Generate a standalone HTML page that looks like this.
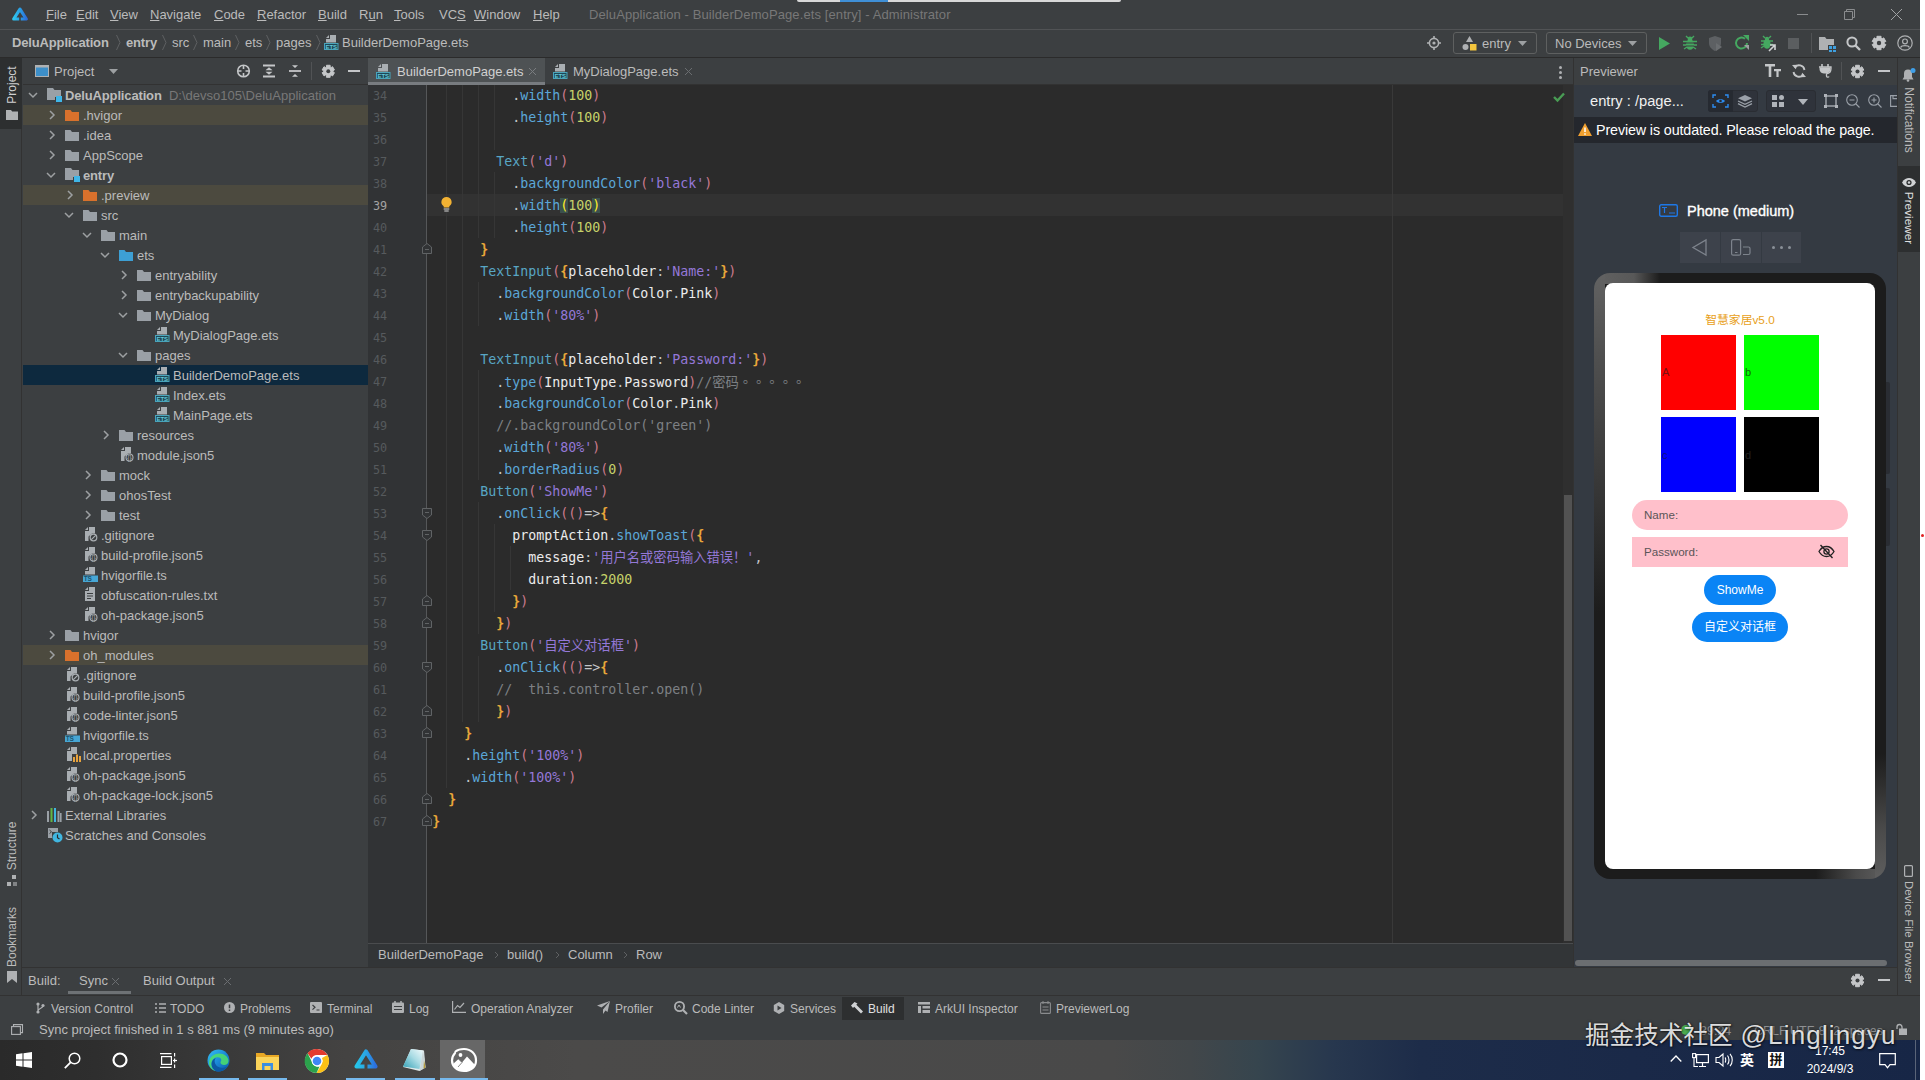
<!DOCTYPE html>
<html lang="en"><head><meta charset="utf-8"><title>DeluApplication - BuilderDemoPage.ets</title>
<style>
*{box-sizing:border-box;margin:0;padding:0}
html,body{width:1925px;height:1080px;overflow:hidden;background:#fff}
body{font-family:"Liberation Sans","Noto Sans CJK SC",sans-serif;font-size:13px;color:#bbb;position:relative}
#win{position:absolute;left:0;top:0;width:1920px;height:1080px;background:#3c3f41;overflow:hidden}
.a{position:absolute;white-space:pre}
.t{position:absolute;white-space:pre;line-height:20px;height:20px;margin-top:1px}
svg{position:absolute;overflow:visible}
.b{font-weight:bold}
.ln{font-family:"DejaVu Sans Mono","Liberation Mono",monospace;font-size:11.8px;line-height:22px;height:22px;letter-spacing:0;margin-top:1px}
.cl{font-family:"DejaVu Sans Mono","Liberation Mono","Noto Sans CJK SC",monospace;font-size:13.3px;line-height:22px;height:22px;letter-spacing:-.007px;margin-top:1px}
.cl .d{color:#c4c6c8}.cl .m{color:#5ba7d8}.cl .c{color:#58a6c4}.cl .p{color:#cc7b8e}.cl .n{color:#c6d26a}
.cl .s{color:#9478d8}.cl .b{color:#e8a63a}.cl .i{color:#ececec}.cl .k{color:#7d8084}
.cl .hp{color:#ffef28;background:#3b514d}
.cl .tc{font-family:"Noto Sans CJK TC","Noto Sans CJK SC",sans-serif;text-spacing-trim:space-all;font-feature-settings:"halt" 0,"chws" 0,"palt" 0}
.cl{text-spacing-trim:space-all}

</style></head><body>
<div id="win">
<div class="a" style="left:0;top:0;width:1920px;height:28px;background:#3c3f41"></div>
<div class="a" style="left:797px;top:0;width:324px;height:2px;background:#d8d8d8;border-radius:0 0 3px 3px"></div><div class="a" style="left:840px;top:0;width:48px;height:2px;background:#3f8fd6"></div>
<svg style="left:11px;top:6px" width="18" height="16" viewBox="0 0 18 16" ><defs><linearGradient id="lg" x1="0" y1="0" x2="1" y2="0"><stop offset="0" stop-color="#2fc6ee"/><stop offset=".5" stop-color="#2aa0e6"/><stop offset="1" stop-color="#2d6fdc"/></linearGradient></defs><path d="M9 3.200L15.300 13H2.700z" fill="none" stroke="url(#lg)" stroke-width="3.200" stroke-linejoin="round"/><path d="M8.200 11h1.600v4H8.200z" fill="#3c3f41"/></svg>
<div class="t " style="left:46px;top:4px;color:#bbb"><u>F</u>ile</div>
<div class="t " style="left:76px;top:4px;color:#bbb"><u>E</u>dit</div>
<div class="t " style="left:110px;top:4px;color:#bbb"><u>V</u>iew</div>
<div class="t " style="left:150px;top:4px;color:#bbb"><u>N</u>avigate</div>
<div class="t " style="left:214px;top:4px;color:#bbb"><u>C</u>ode</div>
<div class="t " style="left:257px;top:4px;color:#bbb"><u>R</u>efactor</div>
<div class="t " style="left:318px;top:4px;color:#bbb"><u>B</u>uild</div>
<div class="t " style="left:359px;top:4px;color:#bbb">R<u>u</u>n</div>
<div class="t " style="left:394px;top:4px;color:#bbb"><u>T</u>ools</div>
<div class="t " style="left:439px;top:4px;color:#bbb">VC<u>S</u></div>
<div class="t " style="left:474px;top:4px;color:#bbb"><u>W</u>indow</div>
<div class="t " style="left:533px;top:4px;color:#bbb"><u>H</u>elp</div>
<div class="t " style="left:589px;top:4px;color:#787878;letter-spacing:.1px">DeluApplication - BuilderDemoPage.ets [entry] - Administrator</div>
<div class="a" style="left:1797px;top:14px;width:11px;height:1px;background:#8a8c8e"></div>
<svg style="left:1844px;top:9px" width="11" height="11" viewBox="0 0 11 11" ><path d="M.5 2.5h8v8h-8z M2.5 2.5v-2h8v8h-2" fill="none" stroke="#8a8c8e" stroke-width="1"/></svg>
<svg style="left:1891px;top:9px" width="11" height="11" viewBox="0 0 11 11" ><path d="M0 0l11 11M11 0L0 11" stroke="#a0a2a4" stroke-width="1"/></svg>
<div class="a" style="left:0;top:29px;width:1920px;height:1px;background:#515355"></div>
<div class="a" style="left:0;top:57px;width:1920px;height:1px;background:#2b2b2b"></div>
<div class="t " style="left:12px;top:32px;color:#bbb;font-weight:bold;letter-spacing:-.15px">DeluApplication</div>
<div class="t " style="left:126px;top:32px;color:#bbb;font-weight:bold;letter-spacing:-.15px">entry</div>
<div class="t " style="left:172px;top:32px;color:#bbb;">src</div>
<div class="t " style="left:203px;top:32px;color:#bbb;">main</div>
<div class="t " style="left:245px;top:32px;color:#bbb;">ets</div>
<div class="t " style="left:276px;top:32px;color:#bbb;">pages</div>
<svg style="left:116px;top:35px" width="5" height="15" viewBox="0 0 5 15" ><path d="M.5 0l3.5 7.5L.5 15" fill="none" stroke="#5e6062" stroke-width="1"/></svg>
<svg style="left:162px;top:35px" width="5" height="15" viewBox="0 0 5 15" ><path d="M.5 0l3.5 7.5L.5 15" fill="none" stroke="#5e6062" stroke-width="1"/></svg>
<svg style="left:193px;top:35px" width="5" height="15" viewBox="0 0 5 15" ><path d="M.5 0l3.5 7.5L.5 15" fill="none" stroke="#5e6062" stroke-width="1"/></svg>
<svg style="left:235px;top:35px" width="5" height="15" viewBox="0 0 5 15" ><path d="M.5 0l3.5 7.5L.5 15" fill="none" stroke="#5e6062" stroke-width="1"/></svg>
<svg style="left:266px;top:35px" width="5" height="15" viewBox="0 0 5 15" ><path d="M.5 0l3.5 7.5L.5 15" fill="none" stroke="#5e6062" stroke-width="1"/></svg>
<svg style="left:316px;top:35px" width="5" height="15" viewBox="0 0 5 15" ><path d="M.5 0l3.5 7.5L.5 15" fill="none" stroke="#5e6062" stroke-width="1"/></svg>
<svg style="left:324px;top:35px" width="15" height="15" viewBox="0 0 15 15" ><path d="M6 0H12V7.5H2V4H6z" fill="#a9aeb2"/><path d="M5 0V3H2z" fill="#a9aeb2"/><rect x=".5" y="8.500" width="13.500" height="6" fill="#1f4756" stroke="#49a4ba" stroke-width="1"/><text x="7.300" y="13.600" font-family="Liberation Sans,sans-serif" font-size="6" font-weight="bold" fill="#62c6d8" text-anchor="middle">ETS</text></svg>
<div class="t " style="left:342px;top:32px;color:#bbb">BuilderDemoPage.ets</div>
<svg style="left:1427px;top:36px" width="14" height="14" viewBox="0 0 14 14" ><circle cx="7" cy="7" r="4.6" fill="none" stroke="#afb1b3" stroke-width="1.6"/><circle cx="7" cy="7" r="1.6" fill="#afb1b3"/><path d="M7 0v2.4M7 11.6V14M0 7h2.4M11.6 7H14" stroke="#afb1b3" stroke-width="1.6"/></svg>
<div class="a" style="left:1453px;top:32px;width:84px;height:22px;border:1px solid #5e6060;border-radius:3px;background:#3c3f41"></div>
<svg style="left:1462px;top:36px" width="15" height="15" viewBox="0 0 15 15" ><path d="M7.5 0l3.5 6h-7z" fill="#afb1b3"/><circle cx="3.5" cy="11" r="3" fill="#afb1b3"/><rect x="8" y="8" width="6.5" height="6.5" fill="#f4c63d"/></svg>
<div class="t " style="left:1482px;top:33px;color:#bbb">entry</div>
<svg style="left:1518px;top:41px" width="9" height="5" viewBox="0 0 9 5" ><path d="M0 0h9L4.5 5z" fill="#9da0a2"/></svg>
<div class="a" style="left:1546px;top:32px;width:101px;height:22px;border:1px solid #5e6060;border-radius:3px;background:#3c3f41"></div>
<div class="t " style="left:1555px;top:33px;color:#bbb">No Devices</div>
<svg style="left:1628px;top:41px" width="9" height="5" viewBox="0 0 9 5" ><path d="M0 0h9L4.5 5z" fill="#9da0a2"/></svg>
<svg style="left:1659px;top:37px" width="12" height="13" viewBox="0 0 12 13" ><path d="M0 0l11 6.5L0 13z" fill="#45a860"/></svg>
<svg style="left:1683px;top:36px" width="14" height="15" viewBox="0 0 14 15" ><ellipse cx="7" cy="8.5" rx="4" ry="5.2" fill="#45a860"/><circle cx="7" cy="3" r="2.4" fill="#45a860"/><path d="M0 5.5h14M0 9h14M1 13l3-2M13 13l-3-2M3 0l2 2M11 0l-2 2" stroke="#45a860" stroke-width="1.3"/><path d="M3 7h8M3 10h8" stroke="#3c3f41" stroke-width="1"/></svg>
<svg style="left:1708px;top:36px" width="15" height="15" viewBox="0 0 15 15" ><path d="M1 2l6-2 6 2v5c0 4-3 6.5-6 8-3-1.5-6-4-6-8z" fill="#5d6063"/><path d="M8 7l6 4-6 4z" fill="#6a6d70"/></svg>
<svg style="left:1734px;top:35px" width="16" height="16" viewBox="0 0 16 16" ><path d="M13 8a5.5 5.5 0 1 1-2-4.2" fill="none" stroke="#45a860" stroke-width="2"/><path d="M9 0h6v6z" fill="#45a860"/><path d="M10 10h5v5z" fill="#9da0a2"/></svg>
<svg style="left:1761px;top:36px" width="15" height="16" viewBox="0 0 15 16" ><ellipse cx="6" cy="8" rx="3.6" ry="4.8" fill="#45a860"/><circle cx="6" cy="3" r="2.2" fill="#45a860"/><path d="M0 5h12M0 8.5h12M0 12l3-2M2 0l2 2M10 0l-2 2" stroke="#45a860" stroke-width="1.3"/><path d="M8 15l6-6M9 9h5v5" fill="none" stroke="#d0d2d4" stroke-width="1.6"/></svg>
<div class="a" style="left:1788px;top:38px;width:11px;height:11px;background:#5b5e60"></div>
<div class="a" style="left:1811px;top:33px;width:1px;height:20px;background:#515355"></div>
<svg style="left:1819px;top:37px" width="17" height="14" viewBox="0 0 17 14" ><path d="M0 0h6l1.5 2H15v6H9v5H0z" fill="#afb1b3"/><rect x="10" y="9" width="3" height="3" fill="#3fa0e0"/><rect x="14" y="9" width="3" height="3" fill="#3fa0e0"/><rect x="10" y="13" width="3" height="2" fill="#3fa0e0"/><rect x="14" y="13" width="3" height="2" fill="#3fa0e0"/></svg>
<svg style="left:1846px;top:36px" width="15" height="15" viewBox="0 0 15 15" ><circle cx="6" cy="6" r="4.6" fill="none" stroke="#c4c6c8" stroke-width="2"/><path d="M9.5 9.5l4.5 4.5" stroke="#c4c6c8" stroke-width="2.4"/></svg>
<svg style="left:1872px;top:36px" width="14" height="14" viewBox="0 0 14 14" ><g transform="translate(7,7)"><path d="M-2.02 -4.77 L-2.07 -6.69 L2.07 -6.69 L2.02 -4.77 L3.12 -4.13 L4.76 -5.14 L6.83 -1.55 L5.14 -0.64 L5.14 0.64 L6.83 1.55 L4.76 5.14 L3.12 4.13 L2.02 4.77 L2.07 6.69 L-2.07 6.69 L-2.02 4.77 L-3.12 4.13 L-4.76 5.14 L-6.83 1.55 L-5.14 0.64 L-5.14 -0.64 L-6.83 -1.55 L-4.76 -5.14 L-3.12 -4.13z" fill="#c4c6c8" stroke="#c4c6c8" stroke-width="1" stroke-linejoin="round"/><circle r="2.17" fill="#3c3f41"/></g></svg>
<svg style="left:1897px;top:35px" width="16" height="16" viewBox="0 0 16 16" ><circle cx="8" cy="8" r="7.2" fill="none" stroke="#afb1b3" stroke-width="1.2"/><circle cx="8" cy="6.4" r="2.4" fill="none" stroke="#afb1b3" stroke-width="1.2"/><path d="M3.6 12.5c1-2.4 7.8-2.4 8.8 0" fill="none" stroke="#afb1b3" stroke-width="1.2"/></svg>
<div class="a" style="left:0;top:58px;width:22px;height:937px;background:#3c3f41;border-right:1px solid #323232"></div>
<div class="a" style="left:0;top:58px;width:22px;height:71px;background:#2d2f30"></div>
<div class="a" style="left:-13px;top:75px;width:50px;height:20px;line-height:20px;transform:rotate(-90deg);color:#d0d0d0;font-size:12px;text-align:center">Project</div>
<svg style="left:6px;top:110px" width="11" height="9" viewBox="0 0 11 9" ><path d="M0 0h5l1.2 1.6H12V10H0z" fill="#afb1b3"/></svg>
<div class="a" style="left:-18px;top:836px;width:60px;height:20px;line-height:20px;transform:rotate(-90deg);color:#bbb;font-size:12px;text-align:center">Structure</div>
<svg style="left:7px;top:875px" width="10" height="12" viewBox="0 0 10 12" ><rect x="5" y="0" width="4" height="4" fill="#afb1b3"/><rect x="0" y="7" width="4" height="4" fill="#afb1b3"/><rect x="6" y="7" width="4" height="4" fill="#afb1b3" opacity=".6"/></svg>
<div class="a" style="left:-23px;top:927px;width:70px;height:20px;line-height:20px;transform:rotate(-90deg);color:#bbb;font-size:12px;text-align:center">Bookmarks</div>
<svg style="left:7px;top:971px" width="10" height="12" viewBox="0 0 10 12" ><path d="M0 0h10v12L5 8 0 12z" fill="#afb1b3"/></svg>
<div class="a" style="left:23px;top:58px;width:345px;height:27px;background:#3c3f41;border-bottom:1px solid #323232"></div>
<svg style="left:35px;top:65px" width="14" height="12" viewBox="0 0 14 12" ><rect x=".5" y=".5" width="13" height="11" fill="#3d8fc9" stroke="#afb1b3"/><rect x="0" y="0" width="14" height="2.5" fill="#afb1b3"/></svg>
<div class="t " style="left:54px;top:61px;color:#bbb">Project</div>
<svg style="left:109px;top:69px" width="9" height="5" viewBox="0 0 9 5" ><path d="M0 0h9L4.5 5z" fill="#9da0a2"/></svg>
<svg style="left:236px;top:64px" width="15" height="15" viewBox="0 0 15 15" ><circle cx="7.500" cy="7" r="5.800" fill="none" stroke="#c4c6c8" stroke-width="1.600"/><path d="M7.500 1v4M7.500 9v4M1.500 7h4M9.500 7h4" stroke="#c4c6c8" stroke-width="1.600"/></svg>
<svg style="left:263px;top:64px" width="12" height="14" viewBox="0 0 12 14" ><path d="M0 1.500h12M0 12.500h12" stroke="#c4c6c8" stroke-width="1.800"/><path d="M2.500 6.300l3.500-3 3.500 3zM2.500 7.700l3.500 3 3.500-3z" fill="#c4c6c8"/></svg>
<svg style="left:289px;top:64px" width="12" height="14" viewBox="0 0 12 14" ><path d="M0 7h12" stroke="#c4c6c8" stroke-width="1.800"/><path d="M3 1.200l3 2.800 3-2.800zM3 12.800l3-2.800 3 2.800z" fill="#c4c6c8"/></svg>
<div class="a" style="left:311px;top:62px;width:1px;height:18px;background:#515355"></div>
<svg style="left:321.7px;top:64.7px" width="12.6" height="12.6" viewBox="0 0 12.6 12.6" ><g transform="translate(6.3,6.3)"><path d="M-1.82 -4.29 L-1.86 -6.02 L1.86 -6.02 L1.82 -4.29 L2.81 -3.72 L4.28 -4.62 L6.14 -1.40 L4.63 -0.57 L4.63 0.57 L6.14 1.40 L4.28 4.62 L2.81 3.72 L1.82 4.29 L1.86 6.02 L-1.86 6.02 L-1.82 4.29 L-2.81 3.72 L-4.28 4.62 L-6.14 1.40 L-4.63 0.57 L-4.63 -0.57 L-6.14 -1.40 L-4.28 -4.62 L-2.81 -3.72z" fill="#c4c6c8" stroke="#c4c6c8" stroke-width="1" stroke-linejoin="round"/><circle r="1.95" fill="#3c3f41"/></g></svg>
<div class="a" style="left:348px;top:70px;width:12px;height:2px;background:#c4c6c8"></div>
<div class="a" style="left:368px;top:58px;width:1205px;height:27px;background:#3c3f41;border-bottom:1px solid #323232"></div>
<div class="a" style="left:368px;top:58px;width:177px;height:27px;background:#4e5254"></div>
<div class="a" style="left:368px;top:82px;width:177px;height:3px;background:#787c80"></div>
<svg style="left:376px;top:64px" width="15" height="15" viewBox="0 0 15 15" ><path d="M6 0H12V7.5H2V4H6z" fill="#a9aeb2"/><path d="M5 0V3H2z" fill="#a9aeb2"/><rect x=".5" y="8.500" width="13.500" height="6" fill="#1f4756" stroke="#49a4ba" stroke-width="1"/><text x="7.300" y="13.600" font-family="Liberation Sans,sans-serif" font-size="6" font-weight="bold" fill="#62c6d8" text-anchor="middle">ETS</text></svg>
<div class="t " style="left:397px;top:61px;color:#d0d0d0">BuilderDemoPage.ets</div>
<svg style="left:529px;top:68px" width="7" height="7" viewBox="0 0 7 7" ><path d="M0 0l7 7M7 0L0 7" stroke="#7a7d80" stroke-width="1"/></svg>
<svg style="left:553px;top:64px" width="15" height="15" viewBox="0 0 15 15" ><path d="M6 0H12V7.5H2V4H6z" fill="#a9aeb2"/><path d="M5 0V3H2z" fill="#a9aeb2"/><rect x=".5" y="8.500" width="13.500" height="6" fill="#1f4756" stroke="#49a4ba" stroke-width="1"/><text x="7.300" y="13.600" font-family="Liberation Sans,sans-serif" font-size="6" font-weight="bold" fill="#62c6d8" text-anchor="middle">ETS</text></svg>
<div class="t " style="left:573px;top:61px;color:#bbb">MyDialogPage.ets</div>
<svg style="left:685px;top:68px" width="7" height="7" viewBox="0 0 7 7" ><path d="M0 0l7 7M7 0L0 7" stroke="#6a6d70" stroke-width="1"/></svg>
<div class="a" style="left:1559px;top:66px;width:3px;height:3px;border-radius:2px;background:#afb1b3"></div>
<div class="a" style="left:1559px;top:71px;width:3px;height:3px;border-radius:2px;background:#afb1b3"></div>
<div class="a" style="left:1559px;top:76px;width:3px;height:3px;border-radius:2px;background:#afb1b3"></div>
<div class="a" style="left:1897px;top:58px;width:23px;height:940px;background:#3c3f41;border-left:1px solid #323232"></div>
<div class="a" style="left:1898px;top:166px;width:22px;height:86px;background:#2d2f30"></div>
<svg style="left:1902px;top:68px" width="14" height="13" viewBox="0 0 14 13" ><path d="M6 1.5a4 4 0 0 0-4 4V9l-1.5 2.5h11L10 9V5.5a4 4 0 0 0-4-4z" fill="#afb1b3"/><circle cx="6" cy="12.5" r="1.3" fill="#afb1b3"/><circle cx="11" cy="2.5" r="2.5" fill="#3f9fe8"/></svg>
<div class="a" style="left:1869px;top:110px;width:80px;height:20px;line-height:20px;transform:rotate(90deg);color:#bbb;font-size:12px;text-align:center">Notifications</div>
<svg style="left:1902px;top:178px" width="14" height="9" viewBox="0 0 14 9" ><path d="M0 4.5C2 1 4.5 0 7 0s5 1 7 4.5C12 8 9.500 9 7 9S2 8 0 4.500z" fill="#d0d2d4"/><circle cx="7" cy="4.5" r="2.6" fill="#2d2f30"/><circle cx="7" cy="4.5" r="1.2" fill="#d0d2d4"/></svg>
<div class="a" style="left:1879px;top:208px;width:60px;height:20px;line-height:20px;transform:rotate(90deg);color:#e0e0e0;font-size:11.800px;text-align:center">Previewer</div>
<svg style="left:1904px;top:865px" width="9" height="12" viewBox="0 0 9 12" ><rect x=".6" y=".6" width="7.8" height="10.8" rx="1" fill="none" stroke="#afb1b3" stroke-width="1.2"/></svg>
<div class="a" style="left:1849px;top:922px;width:120px;height:20px;line-height:20px;transform:rotate(90deg);color:#bbb;font-size:11.500px;text-align:center">Device File Browser</div>
<div class="a" style="left:23px;top:85px;width:345px;height:882px;background:#3c3f41"></div>
<svg style="left:28px;top:91px" width="10" height="8" viewBox="0 0 10 8" ><path d="M1 2l4 4 4-4" fill="none" stroke="#9da0a2" stroke-width="1.5"/></svg>
<svg style="left:47px;top:88px" width="16" height="14" viewBox="0 0 16 14" ><path d="M0 0h6l1.5 2H14v7H8v3H0z" fill="#9aa0a6"/><rect x="9" y="8" width="6" height="6" fill="#3fb6e8"/></svg>
<div class="t" style="left:65px;top:85px;color:#bbb;font-weight:bold;letter-spacing:-.15px;">DeluApplication<span style="font-weight:normal;color:#787878;letter-spacing:0">&nbsp; D:\devso105\DeluApplication</span></div>
<div class="a" style="left:23px;top:105px;width:345px;height:20px;background:#4c4a3f"></div>
<svg style="left:48px;top:110px" width="8" height="10" viewBox="0 0 8 10" ><path d="M2 1l4 4-4 4" fill="none" stroke="#9da0a2" stroke-width="1.5"/></svg>
<svg style="left:65px;top:110px" width="14" height="11" viewBox="0 0 14 11" ><path d="M0 0h5.500l1.500 2H14v9H0z" fill="#d9712c"/></svg>
<div class="t" style="left:83px;top:105px;color:#bbb;">.hvigor</div>
<svg style="left:48px;top:130px" width="8" height="10" viewBox="0 0 8 10" ><path d="M2 1l4 4-4 4" fill="none" stroke="#9da0a2" stroke-width="1.5"/></svg>
<svg style="left:65px;top:130px" width="14" height="11" viewBox="0 0 14 11" ><path d="M0 0h5.500l1.500 2H14v9H0z" fill="#9aa0a6"/></svg>
<div class="t" style="left:83px;top:125px;color:#bbb;">.idea</div>
<svg style="left:48px;top:150px" width="8" height="10" viewBox="0 0 8 10" ><path d="M2 1l4 4-4 4" fill="none" stroke="#9da0a2" stroke-width="1.5"/></svg>
<svg style="left:65px;top:150px" width="14" height="11" viewBox="0 0 14 11" ><path d="M0 0h5.500l1.500 2H14v9H0z" fill="#9aa0a6"/></svg>
<div class="t" style="left:83px;top:145px;color:#bbb;">AppScope</div>
<svg style="left:46px;top:171px" width="10" height="8" viewBox="0 0 10 8" ><path d="M1 2l4 4 4-4" fill="none" stroke="#9da0a2" stroke-width="1.5"/></svg>
<svg style="left:65px;top:168px" width="16" height="14" viewBox="0 0 16 14" ><path d="M0 0h6l1.5 2H14v7H8v3H0z" fill="#9aa0a6"/><rect x="9" y="8" width="6" height="6" fill="#3fb6e8"/></svg>
<div class="t" style="left:83px;top:165px;color:#bbb;font-weight:bold;letter-spacing:-.15px;">entry</div>
<div class="a" style="left:23px;top:185px;width:345px;height:20px;background:#4c4a3f"></div>
<svg style="left:66px;top:190px" width="8" height="10" viewBox="0 0 8 10" ><path d="M2 1l4 4-4 4" fill="none" stroke="#9da0a2" stroke-width="1.5"/></svg>
<svg style="left:83px;top:190px" width="14" height="11" viewBox="0 0 14 11" ><path d="M0 0h5.500l1.500 2H14v9H0z" fill="#d9712c"/></svg>
<div class="t" style="left:101px;top:185px;color:#bbb;">.preview</div>
<svg style="left:64px;top:211px" width="10" height="8" viewBox="0 0 10 8" ><path d="M1 2l4 4 4-4" fill="none" stroke="#9da0a2" stroke-width="1.5"/></svg>
<svg style="left:83px;top:210px" width="14" height="11" viewBox="0 0 14 11" ><path d="M0 0h5.500l1.500 2H14v9H0z" fill="#9aa0a6"/></svg>
<div class="t" style="left:101px;top:205px;color:#bbb;">src</div>
<svg style="left:82px;top:231px" width="10" height="8" viewBox="0 0 10 8" ><path d="M1 2l4 4 4-4" fill="none" stroke="#9da0a2" stroke-width="1.5"/></svg>
<svg style="left:101px;top:230px" width="14" height="11" viewBox="0 0 14 11" ><path d="M0 0h5.500l1.500 2H14v9H0z" fill="#9aa0a6"/></svg>
<div class="t" style="left:119px;top:225px;color:#bbb;">main</div>
<svg style="left:100px;top:251px" width="10" height="8" viewBox="0 0 10 8" ><path d="M1 2l4 4 4-4" fill="none" stroke="#9da0a2" stroke-width="1.5"/></svg>
<svg style="left:119px;top:250px" width="14" height="11" viewBox="0 0 14 11" ><path d="M0 0h5.500l1.500 2H14v9H0z" fill="#3d9fd4"/></svg>
<div class="t" style="left:137px;top:245px;color:#bbb;">ets</div>
<svg style="left:120px;top:270px" width="8" height="10" viewBox="0 0 8 10" ><path d="M2 1l4 4-4 4" fill="none" stroke="#9da0a2" stroke-width="1.5"/></svg>
<svg style="left:137px;top:270px" width="14" height="11" viewBox="0 0 14 11" ><path d="M0 0h5.500l1.500 2H14v9H0z" fill="#9aa0a6"/></svg>
<div class="t" style="left:155px;top:265px;color:#bbb;">entryability</div>
<svg style="left:120px;top:290px" width="8" height="10" viewBox="0 0 8 10" ><path d="M2 1l4 4-4 4" fill="none" stroke="#9da0a2" stroke-width="1.5"/></svg>
<svg style="left:137px;top:290px" width="14" height="11" viewBox="0 0 14 11" ><path d="M0 0h5.500l1.500 2H14v9H0z" fill="#9aa0a6"/></svg>
<div class="t" style="left:155px;top:285px;color:#bbb;">entrybackupability</div>
<svg style="left:118px;top:311px" width="10" height="8" viewBox="0 0 10 8" ><path d="M1 2l4 4 4-4" fill="none" stroke="#9da0a2" stroke-width="1.5"/></svg>
<svg style="left:137px;top:310px" width="14" height="11" viewBox="0 0 14 11" ><path d="M0 0h5.500l1.500 2H14v9H0z" fill="#9aa0a6"/></svg>
<div class="t" style="left:155px;top:305px;color:#bbb;">MyDialog</div>
<svg style="left:155px;top:327px" width="15" height="15" viewBox="0 0 15 15" ><path d="M6 0H12V7.5H2V4H6z" fill="#a9aeb2"/><path d="M5 0V3H2z" fill="#a9aeb2"/><rect x=".5" y="8.500" width="13.500" height="6" fill="#1f4756" stroke="#49a4ba" stroke-width="1"/><text x="7.300" y="13.600" font-family="Liberation Sans,sans-serif" font-size="6" font-weight="bold" fill="#62c6d8" text-anchor="middle">ETS</text></svg>
<div class="t" style="left:173px;top:325px;color:#bbb;">MyDialogPage.ets</div>
<svg style="left:118px;top:351px" width="10" height="8" viewBox="0 0 10 8" ><path d="M1 2l4 4 4-4" fill="none" stroke="#9da0a2" stroke-width="1.5"/></svg>
<svg style="left:137px;top:350px" width="14" height="11" viewBox="0 0 14 11" ><path d="M0 0h5.500l1.500 2H14v9H0z" fill="#9aa0a6"/></svg>
<div class="t" style="left:155px;top:345px;color:#bbb;">pages</div>
<div class="a" style="left:23px;top:365px;width:345px;height:20px;background:#0d293e"></div>
<svg style="left:155px;top:367px" width="15" height="15" viewBox="0 0 15 15" ><path d="M6 0H12V7.5H2V4H6z" fill="#a9aeb2"/><path d="M5 0V3H2z" fill="#a9aeb2"/><rect x=".5" y="8.500" width="13.500" height="6" fill="#1f4756" stroke="#49a4ba" stroke-width="1"/><text x="7.300" y="13.600" font-family="Liberation Sans,sans-serif" font-size="6" font-weight="bold" fill="#62c6d8" text-anchor="middle">ETS</text></svg>
<div class="t" style="left:173px;top:365px;color:#bbb;">BuilderDemoPage.ets</div>
<svg style="left:155px;top:387px" width="15" height="15" viewBox="0 0 15 15" ><path d="M6 0H12V7.5H2V4H6z" fill="#a9aeb2"/><path d="M5 0V3H2z" fill="#a9aeb2"/><rect x=".5" y="8.500" width="13.500" height="6" fill="#1f4756" stroke="#49a4ba" stroke-width="1"/><text x="7.300" y="13.600" font-family="Liberation Sans,sans-serif" font-size="6" font-weight="bold" fill="#62c6d8" text-anchor="middle">ETS</text></svg>
<div class="t" style="left:173px;top:385px;color:#bbb;">Index.ets</div>
<svg style="left:155px;top:407px" width="15" height="15" viewBox="0 0 15 15" ><path d="M6 0H12V7.5H2V4H6z" fill="#a9aeb2"/><path d="M5 0V3H2z" fill="#a9aeb2"/><rect x=".5" y="8.500" width="13.500" height="6" fill="#1f4756" stroke="#49a4ba" stroke-width="1"/><text x="7.300" y="13.600" font-family="Liberation Sans,sans-serif" font-size="6" font-weight="bold" fill="#62c6d8" text-anchor="middle">ETS</text></svg>
<div class="t" style="left:173px;top:405px;color:#bbb;">MainPage.ets</div>
<svg style="left:102px;top:430px" width="8" height="10" viewBox="0 0 8 10" ><path d="M2 1l4 4-4 4" fill="none" stroke="#9da0a2" stroke-width="1.5"/></svg>
<svg style="left:119px;top:430px" width="14" height="11" viewBox="0 0 14 11" ><path d="M0 0h5.500l1.500 2H14v9H0z" fill="#9aa0a6"/></svg>
<div class="t" style="left:137px;top:425px;color:#bbb;">resources</div>
<svg style="left:120px;top:447px" width="15" height="15" viewBox="0 0 15 15" ><path d="M5 0H11V6.500H8L4.500 9.500V14H1V4H5z" fill="#a9aeb2"/><path d="M4 0V3H1z" fill="#a9aeb2"/><circle cx="9.500" cy="10.500" r="3.500" fill="none" stroke="#a9aeb2" stroke-width="1.100"/><text x="9.500" y="12.700" font-family="Liberation Sans,sans-serif" font-size="6.500" fill="#a9aeb2" text-anchor="middle">{}</text></svg>
<div class="t" style="left:137px;top:445px;color:#bbb;">module.json5</div>
<svg style="left:84px;top:470px" width="8" height="10" viewBox="0 0 8 10" ><path d="M2 1l4 4-4 4" fill="none" stroke="#9da0a2" stroke-width="1.5"/></svg>
<svg style="left:101px;top:470px" width="14" height="11" viewBox="0 0 14 11" ><path d="M0 0h5.500l1.500 2H14v9H0z" fill="#9aa0a6"/></svg>
<div class="t" style="left:119px;top:465px;color:#bbb;">mock</div>
<svg style="left:84px;top:490px" width="8" height="10" viewBox="0 0 8 10" ><path d="M2 1l4 4-4 4" fill="none" stroke="#9da0a2" stroke-width="1.5"/></svg>
<svg style="left:101px;top:490px" width="14" height="11" viewBox="0 0 14 11" ><path d="M0 0h5.500l1.500 2H14v9H0z" fill="#9aa0a6"/></svg>
<div class="t" style="left:119px;top:485px;color:#bbb;">ohosTest</div>
<svg style="left:84px;top:510px" width="8" height="10" viewBox="0 0 8 10" ><path d="M2 1l4 4-4 4" fill="none" stroke="#9da0a2" stroke-width="1.5"/></svg>
<svg style="left:101px;top:510px" width="14" height="11" viewBox="0 0 14 11" ><path d="M0 0h5.500l1.500 2H14v9H0z" fill="#9aa0a6"/></svg>
<div class="t" style="left:119px;top:505px;color:#bbb;">test</div>
<svg style="left:84px;top:527px" width="15" height="15" viewBox="0 0 15 15" ><path d="M5 0H11V6.500H8L4.500 9.500V14H1V4H5z" fill="#a9aeb2"/><path d="M4 0V3H1z" fill="#a9aeb2"/><circle cx="9.500" cy="10.500" r="3.300" fill="none" stroke="#a9aeb2" stroke-width="1.200"/><path d="M7.300 12.700l4.400-4.400" stroke="#a9aeb2" stroke-width="1.200"/></svg>
<div class="t" style="left:101px;top:525px;color:#bbb;">.gitignore</div>
<svg style="left:84px;top:547px" width="15" height="15" viewBox="0 0 15 15" ><path d="M5 0H11V6.500H8L4.500 9.500V14H1V4H5z" fill="#a9aeb2"/><path d="M4 0V3H1z" fill="#a9aeb2"/><circle cx="9.500" cy="10.500" r="3.500" fill="none" stroke="#a9aeb2" stroke-width="1.100"/><text x="9.500" y="12.700" font-family="Liberation Sans,sans-serif" font-size="6.500" fill="#a9aeb2" text-anchor="middle">{}</text></svg>
<div class="t" style="left:101px;top:545px;color:#bbb;">build-profile.json5</div>
<svg style="left:83px;top:567px" width="15" height="15" viewBox="0 0 15 15" ><path d="M6 0H12V7.5H2V4H6z" fill="#a9aeb2"/><path d="M5 0V3H2z" fill="#a9aeb2"/><rect x="0" y="8.500" width="15" height="6.500" fill="#47a6d4"/><text x="4.800" y="14.200" font-family="Liberation Sans,sans-serif" font-size="6.500" font-weight="bold" fill="#1c536e" text-anchor="middle">TS</text></svg>
<div class="t" style="left:101px;top:565px;color:#bbb;">hvigorfile.ts</div>
<svg style="left:84px;top:587px" width="15" height="15" viewBox="0 0 15 15" ><path d="M5 0H11V14H1V4H5z" fill="#a9aeb2"/><path d="M4 0V3H1z" fill="#a9aeb2"/><path d="M3 6.500h6M3 9h6M3 11.500h4" stroke="#3c3f41" stroke-width="1.100"/></svg>
<div class="t" style="left:101px;top:585px;color:#bbb;">obfuscation-rules.txt</div>
<svg style="left:84px;top:607px" width="15" height="15" viewBox="0 0 15 15" ><path d="M5 0H11V6.500H8L4.500 9.500V14H1V4H5z" fill="#a9aeb2"/><path d="M4 0V3H1z" fill="#a9aeb2"/><circle cx="9.500" cy="10.500" r="3.500" fill="none" stroke="#a9aeb2" stroke-width="1.100"/><text x="9.500" y="12.700" font-family="Liberation Sans,sans-serif" font-size="6.500" fill="#a9aeb2" text-anchor="middle">{}</text></svg>
<div class="t" style="left:101px;top:605px;color:#bbb;">oh-package.json5</div>
<svg style="left:48px;top:630px" width="8" height="10" viewBox="0 0 8 10" ><path d="M2 1l4 4-4 4" fill="none" stroke="#9da0a2" stroke-width="1.5"/></svg>
<svg style="left:65px;top:630px" width="14" height="11" viewBox="0 0 14 11" ><path d="M0 0h5.500l1.500 2H14v9H0z" fill="#9aa0a6"/></svg>
<div class="t" style="left:83px;top:625px;color:#bbb;">hvigor</div>
<div class="a" style="left:23px;top:645px;width:345px;height:20px;background:#4c4a3f"></div>
<svg style="left:48px;top:650px" width="8" height="10" viewBox="0 0 8 10" ><path d="M2 1l4 4-4 4" fill="none" stroke="#9da0a2" stroke-width="1.5"/></svg>
<svg style="left:65px;top:650px" width="14" height="11" viewBox="0 0 14 11" ><path d="M0 0h5.500l1.500 2H14v9H0z" fill="#d9712c"/></svg>
<div class="t" style="left:83px;top:645px;color:#bbb;">oh_modules</div>
<svg style="left:66px;top:667px" width="15" height="15" viewBox="0 0 15 15" ><path d="M5 0H11V6.500H8L4.500 9.500V14H1V4H5z" fill="#a9aeb2"/><path d="M4 0V3H1z" fill="#a9aeb2"/><circle cx="9.500" cy="10.500" r="3.300" fill="none" stroke="#a9aeb2" stroke-width="1.200"/><path d="M7.300 12.700l4.400-4.400" stroke="#a9aeb2" stroke-width="1.200"/></svg>
<div class="t" style="left:83px;top:665px;color:#bbb;">.gitignore</div>
<svg style="left:66px;top:687px" width="15" height="15" viewBox="0 0 15 15" ><path d="M5 0H11V6.500H8L4.500 9.500V14H1V4H5z" fill="#a9aeb2"/><path d="M4 0V3H1z" fill="#a9aeb2"/><circle cx="9.500" cy="10.500" r="3.500" fill="none" stroke="#a9aeb2" stroke-width="1.100"/><text x="9.500" y="12.700" font-family="Liberation Sans,sans-serif" font-size="6.500" fill="#a9aeb2" text-anchor="middle">{}</text></svg>
<div class="t" style="left:83px;top:685px;color:#bbb;">build-profile.json5</div>
<svg style="left:66px;top:707px" width="15" height="15" viewBox="0 0 15 15" ><path d="M5 0H11V6.500H8L4.500 9.500V14H1V4H5z" fill="#a9aeb2"/><path d="M4 0V3H1z" fill="#a9aeb2"/><circle cx="9.500" cy="10.500" r="3.500" fill="none" stroke="#a9aeb2" stroke-width="1.100"/><text x="9.500" y="12.700" font-family="Liberation Sans,sans-serif" font-size="6.500" fill="#a9aeb2" text-anchor="middle">{}</text></svg>
<div class="t" style="left:83px;top:705px;color:#bbb;">code-linter.json5</div>
<svg style="left:65px;top:727px" width="15" height="15" viewBox="0 0 15 15" ><path d="M6 0H12V7.5H2V4H6z" fill="#a9aeb2"/><path d="M5 0V3H2z" fill="#a9aeb2"/><rect x="0" y="8.500" width="15" height="6.500" fill="#47a6d4"/><text x="4.800" y="14.200" font-family="Liberation Sans,sans-serif" font-size="6.500" font-weight="bold" fill="#1c536e" text-anchor="middle">TS</text></svg>
<div class="t" style="left:83px;top:725px;color:#bbb;">hvigorfile.ts</div>
<svg style="left:66px;top:747px" width="15" height="15" viewBox="0 0 15 15" ><path d="M5 0H11V7H6V14H1V4H5z" fill="#a9aeb2"/><path d="M4 0V3H1z" fill="#a9aeb2"/><rect x="7" y="10" width="2" height="5" fill="#e8a33d"/><rect x="10" y="7.500" width="2" height="7.500" fill="#e8a33d"/><rect x="13" y="9" width="2" height="6" fill="#e8a33d"/></svg>
<div class="t" style="left:83px;top:745px;color:#bbb;">local.properties</div>
<svg style="left:66px;top:767px" width="15" height="15" viewBox="0 0 15 15" ><path d="M5 0H11V6.500H8L4.500 9.500V14H1V4H5z" fill="#a9aeb2"/><path d="M4 0V3H1z" fill="#a9aeb2"/><circle cx="9.500" cy="10.500" r="3.500" fill="none" stroke="#a9aeb2" stroke-width="1.100"/><text x="9.500" y="12.700" font-family="Liberation Sans,sans-serif" font-size="6.500" fill="#a9aeb2" text-anchor="middle">{}</text></svg>
<div class="t" style="left:83px;top:765px;color:#bbb;">oh-package.json5</div>
<svg style="left:66px;top:787px" width="15" height="15" viewBox="0 0 15 15" ><path d="M5 0H11V6.500H8L4.500 9.500V14H1V4H5z" fill="#a9aeb2"/><path d="M4 0V3H1z" fill="#a9aeb2"/><circle cx="9.500" cy="10.500" r="3.500" fill="none" stroke="#a9aeb2" stroke-width="1.100"/><text x="9.500" y="12.700" font-family="Liberation Sans,sans-serif" font-size="6.500" fill="#a9aeb2" text-anchor="middle">{}</text></svg>
<div class="t" style="left:83px;top:785px;color:#bbb;">oh-package-lock.json5</div>
<svg style="left:30px;top:810px" width="8" height="10" viewBox="0 0 8 10" ><path d="M2 1l4 4-4 4" fill="none" stroke="#9da0a2" stroke-width="1.5"/></svg>
<svg style="left:47px;top:808px" width="15" height="14" viewBox="0 0 15 14" ><rect x="0" y="3" width="2" height="11" fill="#9aa0a6"/><rect x="3.5" y="0" width="2" height="14" fill="#62b543"/><rect x="7" y="0" width="2" height="14" fill="#40b6e0"/><rect x="10.5" y="3" width="2" height="11" fill="#9aa0a6"/><rect x="13" y="5" width="1.6" height="9" fill="#9aa0a6"/></svg>
<div class="t" style="left:65px;top:805px;color:#bbb;">External Libraries</div>
<svg style="left:47px;top:827px" width="16" height="16" viewBox="0 0 16 16" ><path d="M1 1h10v4H5v6H1z" fill="#9aa0a6"/><path d="M2.5 3l2 1.8-2 1.8" stroke="#3c3f41" fill="none" stroke-width="1"/><circle cx="10.5" cy="10.5" r="5" fill="#40b6e0"/><path d="M10.5 7.5v3.2l2 1.2" stroke="#2b2b2b" fill="none" stroke-width="1.2"/></svg>
<div class="t" style="left:65px;top:825px;color:#bbb;">Scratches and Consoles</div>
<div class="a" style="left:368px;top:85px;width:1205px;height:858px;background:#2b2b2b"></div>
<div class="a" style="left:368px;top:85px;width:58px;height:858px;background:#313335"></div>
<div class="a" style="left:427px;top:194px;width:1136px;height:22px;background:#323232"></div>
<div class="a" style="left:426px;top:85px;width:1px;height:858px;background:#555759"></div>
<div class="a" style="left:446px;top:85px;width:1px;height:703px;background:#363636"></div>
<div class="a" style="left:462px;top:85px;width:1px;height:637px;background:#363636"></div>
<div class="a" style="left:478px;top:85px;width:1px;height:153px;background:#363636"></div>
<div class="a" style="left:494px;top:85px;width:1px;height:65px;background:#363636"></div>
<div class="a" style="left:494px;top:172px;width:1px;height:66px;background:#363636"></div>
<div class="a" style="left:478px;top:282px;width:1px;height:44px;background:#363636"></div>
<div class="a" style="left:478px;top:370px;width:1px;height:110px;background:#363636"></div>
<div class="a" style="left:478px;top:502px;width:1px;height:132px;background:#363636"></div>
<div class="a" style="left:494px;top:524px;width:1px;height:88px;background:#363636"></div>
<div class="a" style="left:510px;top:546px;width:1px;height:44px;background:#363636"></div>
<div class="a" style="left:478px;top:656px;width:1px;height:66px;background:#363636"></div>
<div class="a" style="left:1392px;top:85px;width:1px;height:858px;background:#393939"></div>
<div class="a" style="left:1563px;top:85px;width:10px;height:858px;background:#2f2f2f"></div>
<div class="a" style="left:1564px;top:495px;width:8px;height:446px;background:#525252"></div>
<svg style="left:1553px;top:92px" width="12" height="10" viewBox="0 0 12 10" ><path d="M1 5l3.500 3.500L11 1.500" fill="none" stroke="#499c54" stroke-width="2.4"/></svg>
<div class="a ln" style="left:373px;top:84px;color:#565a5d">34</div>
<div class="a cl" style="left:512.2px;top:84px"><span class="d">.</span><span class="m">width</span><span class="p">(</span><span class="n">100</span><span class="p">)</span></div>
<div class="a ln" style="left:373px;top:106px;color:#565a5d">35</div>
<div class="a cl" style="left:512.2px;top:106px"><span class="d">.</span><span class="m">height</span><span class="p">(</span><span class="n">100</span><span class="p">)</span></div>
<div class="a ln" style="left:373px;top:128px;color:#565a5d">36</div>
<div class="a ln" style="left:373px;top:150px;color:#565a5d">37</div>
<div class="a cl" style="left:496.2px;top:150px"><span class="c">Text</span><span class="p">(</span><span class="s">'d'</span><span class="p">)</span></div>
<div class="a ln" style="left:373px;top:172px;color:#565a5d">38</div>
<div class="a cl" style="left:512.2px;top:172px"><span class="d">.</span><span class="m">backgroundColor</span><span class="p">(</span><span class="s">'black'</span><span class="p">)</span></div>
<div class="a ln" style="left:373px;top:194px;color:#a4a3a3">39</div>
<div class="a cl" style="left:512.2px;top:194px"><span class="d">.</span><span class="m">width</span><span class="hp">(</span><span class="n">100</span><span class="hp">)</span></div>
<div class="a ln" style="left:373px;top:216px;color:#565a5d">40</div>
<div class="a cl" style="left:512.2px;top:216px"><span class="d">.</span><span class="m">height</span><span class="p">(</span><span class="n">100</span><span class="p">)</span></div>
<div class="a ln" style="left:373px;top:238px;color:#565a5d">41</div>
<div class="a cl" style="left:480.2px;top:238px"><span class="b">}</span></div>
<div class="a ln" style="left:373px;top:260px;color:#565a5d">42</div>
<div class="a cl" style="left:480.2px;top:260px"><span class="c">TextInput</span><span class="p">(</span><span class="b">{</span><span class="i">placeholder</span><span class="d">:</span><span class="s">'Name:'</span><span class="b">}</span><span class="p">)</span></div>
<div class="a ln" style="left:373px;top:282px;color:#565a5d">43</div>
<div class="a cl" style="left:496.2px;top:282px"><span class="d">.</span><span class="m">backgroundColor</span><span class="p">(</span><span class="i">Color</span><span class="d">.</span><span class="i">Pink</span><span class="p">)</span></div>
<div class="a ln" style="left:373px;top:304px;color:#565a5d">44</div>
<div class="a cl" style="left:496.2px;top:304px"><span class="d">.</span><span class="m">width</span><span class="p">(</span><span class="s">'80%'</span><span class="p">)</span></div>
<div class="a ln" style="left:373px;top:326px;color:#565a5d">45</div>
<div class="a ln" style="left:373px;top:348px;color:#565a5d">46</div>
<div class="a cl" style="left:480.2px;top:348px"><span class="c">TextInput</span><span class="p">(</span><span class="b">{</span><span class="i">placeholder</span><span class="d">:</span><span class="s">'Password:'</span><span class="b">}</span><span class="p">)</span></div>
<div class="a ln" style="left:373px;top:370px;color:#565a5d">47</div>
<div class="a cl" style="left:496.2px;top:370px"><span class="d">.</span><span class="m">type</span><span class="p">(</span><span class="i">InputType</span><span class="d">.</span><span class="i">Password</span><span class="p">)</span><span class="k">//密码</span><span class="k tc">。。。。。</span></div>
<div class="a ln" style="left:373px;top:392px;color:#565a5d">48</div>
<div class="a cl" style="left:496.2px;top:392px"><span class="d">.</span><span class="m">backgroundColor</span><span class="p">(</span><span class="i">Color</span><span class="d">.</span><span class="i">Pink</span><span class="p">)</span></div>
<div class="a ln" style="left:373px;top:414px;color:#565a5d">49</div>
<div class="a cl" style="left:496.2px;top:414px"><span class="k">//.backgroundColor('green')</span></div>
<div class="a ln" style="left:373px;top:436px;color:#565a5d">50</div>
<div class="a cl" style="left:496.2px;top:436px"><span class="d">.</span><span class="m">width</span><span class="p">(</span><span class="s">'80%'</span><span class="p">)</span></div>
<div class="a ln" style="left:373px;top:458px;color:#565a5d">51</div>
<div class="a cl" style="left:496.2px;top:458px"><span class="d">.</span><span class="m">borderRadius</span><span class="p">(</span><span class="n">0</span><span class="p">)</span></div>
<div class="a ln" style="left:373px;top:480px;color:#565a5d">52</div>
<div class="a cl" style="left:480.2px;top:480px"><span class="c">Button</span><span class="p">(</span><span class="s">'ShowMe'</span><span class="p">)</span></div>
<div class="a ln" style="left:373px;top:502px;color:#565a5d">53</div>
<div class="a cl" style="left:496.2px;top:502px"><span class="d">.</span><span class="m">onClick</span><span class="p">(</span><span class="p">()</span><span class="d">=&gt;</span><span class="b">{</span></div>
<div class="a ln" style="left:373px;top:524px;color:#565a5d">54</div>
<div class="a cl" style="left:512.2px;top:524px"><span class="i">promptAction</span><span class="d">.</span><span class="m">showToast</span><span class="p">(</span><span class="b">{</span></div>
<div class="a ln" style="left:373px;top:546px;color:#565a5d">55</div>
<div class="a cl" style="left:528.2px;top:546px"><span class="i">message</span><span class="d">:</span><span class="s">'用户名或密码输入错误！'</span><span class="d">,</span></div>
<div class="a ln" style="left:373px;top:568px;color:#565a5d">56</div>
<div class="a cl" style="left:528.2px;top:568px"><span class="i">duration</span><span class="d">:</span><span class="n">2000</span></div>
<div class="a ln" style="left:373px;top:590px;color:#565a5d">57</div>
<div class="a cl" style="left:512.2px;top:590px"><span class="b">}</span><span class="p">)</span></div>
<div class="a ln" style="left:373px;top:612px;color:#565a5d">58</div>
<div class="a cl" style="left:496.2px;top:612px"><span class="b">}</span><span class="p">)</span></div>
<div class="a ln" style="left:373px;top:634px;color:#565a5d">59</div>
<div class="a cl" style="left:480.2px;top:634px"><span class="c">Button</span><span class="p">(</span><span class="s">'自定义对话框'</span><span class="p">)</span></div>
<div class="a ln" style="left:373px;top:656px;color:#565a5d">60</div>
<div class="a cl" style="left:496.2px;top:656px"><span class="d">.</span><span class="m">onClick</span><span class="p">(</span><span class="p">()</span><span class="d">=&gt;</span><span class="b">{</span></div>
<div class="a ln" style="left:373px;top:678px;color:#565a5d">61</div>
<div class="a cl" style="left:496.2px;top:678px"><span class="k">//  this.controller.open()</span></div>
<div class="a ln" style="left:373px;top:700px;color:#565a5d">62</div>
<div class="a cl" style="left:496.2px;top:700px"><span class="b">}</span><span class="p">)</span></div>
<div class="a ln" style="left:373px;top:722px;color:#565a5d">63</div>
<div class="a cl" style="left:464.2px;top:722px"><span class="b">}</span></div>
<div class="a ln" style="left:373px;top:744px;color:#565a5d">64</div>
<div class="a cl" style="left:464.2px;top:744px"><span class="d">.</span><span class="m">height</span><span class="p">(</span><span class="s">'100%'</span><span class="p">)</span></div>
<div class="a ln" style="left:373px;top:766px;color:#565a5d">65</div>
<div class="a cl" style="left:464.2px;top:766px"><span class="d">.</span><span class="m">width</span><span class="p">(</span><span class="s">'100%'</span><span class="p">)</span></div>
<div class="a ln" style="left:373px;top:788px;color:#565a5d">66</div>
<div class="a cl" style="left:448.2px;top:788px"><span class="b">}</span></div>
<div class="a ln" style="left:373px;top:810px;color:#565a5d">67</div>
<div class="a cl" style="left:432.2px;top:810px"><span class="b">}</span></div>
<svg style="left:421.5px;top:243px" width="10" height="11" viewBox="0 0 10 11" ><path d="M.5 10.500h9V4L5 .5.5 4z" fill="#313335" stroke="#606365" stroke-width="1"/><path d="M3 6.500h4" stroke="#606365" stroke-width="1"/></svg>
<svg style="left:421.5px;top:508px" width="10" height="11" viewBox="0 0 10 11" ><path d="M.5 .5h9v6.5L5 10.500.5 7z" fill="#313335" stroke="#606365" stroke-width="1"/><path d="M3 4.500h4" stroke="#606365" stroke-width="1"/></svg>
<svg style="left:421.5px;top:530px" width="10" height="11" viewBox="0 0 10 11" ><path d="M.5 .5h9v6.5L5 10.500.5 7z" fill="#313335" stroke="#606365" stroke-width="1"/><path d="M3 4.500h4" stroke="#606365" stroke-width="1"/></svg>
<svg style="left:421.5px;top:595px" width="10" height="11" viewBox="0 0 10 11" ><path d="M.5 10.500h9V4L5 .5.5 4z" fill="#313335" stroke="#606365" stroke-width="1"/><path d="M3 6.500h4" stroke="#606365" stroke-width="1"/></svg>
<svg style="left:421.5px;top:617px" width="10" height="11" viewBox="0 0 10 11" ><path d="M.5 10.500h9V4L5 .5.5 4z" fill="#313335" stroke="#606365" stroke-width="1"/><path d="M3 6.500h4" stroke="#606365" stroke-width="1"/></svg>
<svg style="left:421.5px;top:662px" width="10" height="11" viewBox="0 0 10 11" ><path d="M.5 .5h9v6.5L5 10.500.5 7z" fill="#313335" stroke="#606365" stroke-width="1"/><path d="M3 4.500h4" stroke="#606365" stroke-width="1"/></svg>
<svg style="left:421.5px;top:705px" width="10" height="11" viewBox="0 0 10 11" ><path d="M.5 10.500h9V4L5 .5.5 4z" fill="#313335" stroke="#606365" stroke-width="1"/><path d="M3 6.500h4" stroke="#606365" stroke-width="1"/></svg>
<svg style="left:421.5px;top:727px" width="10" height="11" viewBox="0 0 10 11" ><path d="M.5 10.500h9V4L5 .5.5 4z" fill="#313335" stroke="#606365" stroke-width="1"/><path d="M3 6.500h4" stroke="#606365" stroke-width="1"/></svg>
<svg style="left:421.5px;top:793px" width="10" height="11" viewBox="0 0 10 11" ><path d="M.5 10.500h9V4L5 .5.5 4z" fill="#313335" stroke="#606365" stroke-width="1"/><path d="M3 6.500h4" stroke="#606365" stroke-width="1"/></svg>
<svg style="left:421.5px;top:815px" width="10" height="11" viewBox="0 0 10 11" ><path d="M.5 10.500h9V4L5 .5.5 4z" fill="#313335" stroke="#606365" stroke-width="1"/><path d="M3 6.500h4" stroke="#606365" stroke-width="1"/></svg>
<svg style="left:441px;top:197px" width="11" height="15" viewBox="0 0 11 15" ><path d="M5.500 0a5 5 0 0 0-2.800 9.200v1.300h5.600V9.200A5 5 0 0 0 5.500 0z" fill="#f2b233"/><path d="M2.700 12h5.600M3.300 14h4.400" stroke="#d8d8d8" stroke-width="1"/></svg>
<div class="a" style="left:368px;top:943px;width:1205px;height:24px;background:#323537;border-top:1px solid #4a4c4e"></div>
<div class="t" style="left:378px;top:944px;color:#bbb">BuilderDemoPage</div>
<div class="t" style="left:507px;top:944px;color:#bbb">build()</div>
<div class="t" style="left:568px;top:944px;color:#bbb">Column</div>
<div class="t" style="left:636px;top:944px;color:#bbb">Row</div>
<svg style="left:494px;top:951px" width="5" height="8" viewBox="0 0 5 8" ><path d="M1 1l3 3-3 3" fill="none" stroke="#5e6062" stroke-width="1"/></svg>
<svg style="left:555px;top:951px" width="5" height="8" viewBox="0 0 5 8" ><path d="M1 1l3 3-3 3" fill="none" stroke="#5e6062" stroke-width="1"/></svg>
<svg style="left:623px;top:951px" width="5" height="8" viewBox="0 0 5 8" ><path d="M1 1l3 3-3 3" fill="none" stroke="#5e6062" stroke-width="1"/></svg>
<div class="a" style="left:1573px;top:58px;width:1px;height:910px;background:#323232"></div>
<div class="a" style="left:1574px;top:58px;width:323px;height:27px;background:#3c3f41"></div>
<div class="t" style="left:1580px;top:61px;color:#bbb">Previewer</div>
<svg style="left:1765px;top:64px" width="16" height="13" viewBox="0 0 16 13" ><path d="M0 0h10v2.500H6.300V13H3.700V2.500H0zM9 5h7v2.200h-2.400V13h-2.200V7.200H9z" fill="#c4c6c8"/></svg>
<svg style="left:1792px;top:64px" width="14" height="14" viewBox="0 0 14 14" ><path d="M12.500 6A5.600 5.600 0 0 0 2.500 3.500M1.500 8a5.600 5.600 0 0 0 10 2.500" fill="none" stroke="#c4c6c8" stroke-width="1.800"/><path d="M0 1l3.800 4.300L5.500.8zM14 13l-3.800-4.300-1.700 4.500z" fill="#c4c6c8"/></svg>
<svg style="left:1818px;top:64px" width="14" height="15" viewBox="0 0 14 15" ><path d="M1 3h12v1.500c0 3-2 5-4.500 5.300V12c0 1.500 2 1.500 2.500 .5" fill="none" stroke="#c4c6c8" stroke-width="1.300"/><path d="M1.500 3.500h11V5c0 3-2.400 4.600-5.500 4.600S1.500 8 1.500 5z" fill="#c4c6c8"/><path d="M4 0v3M10 0v3" stroke="#c4c6c8" stroke-width="1.600"/></svg>
<div class="a" style="left:1841px;top:62px;width:1px;height:18px;background:#515355"></div>
<svg style="left:1850.5px;top:64.5px" width="13.0" height="13.0" viewBox="0 0 13.0 13.0" ><g transform="translate(6.5,6.5)"><path d="M-1.87 -4.43 L-1.92 -6.21 L1.92 -6.21 L1.87 -4.43 L2.90 -3.84 L4.42 -4.77 L6.34 -1.44 L4.77 -0.59 L4.77 0.59 L6.34 1.44 L4.42 4.77 L2.90 3.84 L1.87 4.43 L1.92 6.21 L-1.92 6.21 L-1.87 4.43 L-2.90 3.84 L-4.42 4.77 L-6.34 1.44 L-4.77 0.59 L-4.77 -0.59 L-6.34 -1.44 L-4.42 -4.77 L-2.90 -3.84z" fill="#c4c6c8" stroke="#c4c6c8" stroke-width="1" stroke-linejoin="round"/><circle r="2.02" fill="#3c3f41"/></g></svg>
<div class="a" style="left:1878px;top:70px;width:12px;height:2px;background:#c4c6c8"></div>
<div class="a" style="left:1574px;top:85px;width:323px;height:882px;background:#343a42"></div>
<div class="a" style="left:1590px;top:91px;color:#f0f0f0;font-size:14.700px;line-height:20px">entry : /page...</div>
<div class="a" style="left:1708px;top:90px;width:50px;height:22px;border:1px solid #2a2d33;border-radius:3px;background:#2f333b"></div>
<div class="a" style="left:1708px;top:90px;width:25px;height:22px;border-radius:3px 0 0 3px;background:#262a31"></div>
<svg style="left:1713px;top:95px" width="15" height="12" viewBox="0 0 15 12" ><path d="M0 3V0h3M12 0h3v3M15 9v3h-3M3 12H0V9" fill="none" stroke="#2d8cf0" stroke-width="1.400"/><path d="M3 6c1.500-2.500 7.500-2.500 9 0-1.500 2.500-7.500 2.500-9 0z" fill="#2d8cf0"/><circle cx="7.500" cy="6" r="1.300" fill="#262a31"/></svg>
<svg style="left:1738px;top:95px" width="14" height="12" viewBox="0 0 14 12" ><path d="M7 0l7 3.300-7 3.300-7-3.300z" fill="#9aa0a8"/><path d="M0 6l7 3.300L14 6M0 8.700L7 12l7-3.300" fill="none" stroke="#9aa0a8" stroke-width="1.300"/></svg>
<div class="a" style="left:1766px;top:90px;width:50px;height:22px;border:1px solid #2a2d33;border-radius:3px;background:#2f333b"></div>
<svg style="left:1772px;top:95px" width="12" height="12" viewBox="0 0 12 12" ><rect x="0" y="0" width="5" height="5" fill="#b0b4ba"/><circle cx="9.500" cy="2.500" r="2.500" fill="#b0b4ba"/><rect x="0" y="7" width="5" height="5" fill="#b0b4ba"/><rect x="7" y="7" width="5" height="5" fill="#b0b4ba"/></svg>
<svg style="left:1798px;top:99px" width="10" height="6" viewBox="0 0 10 6" ><path d="M0 0h10L5 6z" fill="#b0b4ba"/></svg>
<svg style="left:1824px;top:94px" width="14" height="14" viewBox="0 0 14 14" ><rect x="2" y="2" width="10" height="10" fill="none" stroke="#b0b4ba" stroke-width="1.300"/><rect x="0" y="0" width="3" height="3" fill="#b0b4ba"/><rect x="11" y="0" width="3" height="3" fill="#b0b4ba"/><rect x="0" y="11" width="3" height="3" fill="#b0b4ba"/><rect x="11" y="11" width="3" height="3" fill="#b0b4ba"/></svg>
<svg style="left:1846px;top:94px" width="14" height="14" viewBox="0 0 14 14" ><circle cx="6" cy="6" r="5.300" fill="none" stroke="#9aa0a8" stroke-width="1.100"/><path d="M3.500 6h5M10 10l3.500 3.500" stroke="#9aa0a8" stroke-width="1.100"/></svg>
<svg style="left:1868px;top:94px" width="14" height="14" viewBox="0 0 14 14" ><circle cx="6" cy="6" r="5.300" fill="none" stroke="#9aa0a8" stroke-width="1.100"/><path d="M3.500 6h5M6 3.500v5M10 10l3.500 3.500" stroke="#9aa0a8" stroke-width="1.100"/></svg>
<svg style="left:1890px;top:95px" width="7" height="12" viewBox="0 0 7 12" ><path d="M7 .6H.6v10.800H7M3 .6v3h4" fill="none" stroke="#9aa0a8" stroke-width="1.100"/></svg>
<div class="a" style="left:1574px;top:117px;width:323px;height:26px;background:#24272d"></div>
<svg style="left:1578px;top:123px" width="14" height="13" viewBox="0 0 14 13" ><path d="M7 0l7 13H0z" fill="#f0a030"/><path d="M7 4.500v4.500M7 10.300v1.500" stroke="#fff" stroke-width="1.500"/></svg>
<div class="a" style="left:1596px;top:120px;color:#fff;font-size:14.3px;line-height:20px;letter-spacing:-.12px">Preview is outdated. Please reload the page.</div>
<svg style="left:1659px;top:204px" width="19" height="13" viewBox="0 0 19 13" ><rect x=".7" y=".7" width="17.600" height="11.600" rx="1.500" fill="none" stroke="#1e78e6" stroke-width="1.400"/><path d="M3 3.500h5M5.500 3.500v5.500M10 9h6" stroke="#1e78e6" stroke-width="1.200"/></svg>
<div class="a" style="left:1687px;top:201px;color:#fff;font-size:14.500px;line-height:20px;-webkit-text-stroke:.35px #fff">Phone (medium)</div>
<div class="a" style="left:1680px;top:232px;width:121px;height:31px;background:#3d424b"></div>
<div class="a" style="left:1720px;top:232px;width:1px;height:31px;background:#343a42"></div>
<div class="a" style="left:1761px;top:232px;width:1px;height:31px;background:#343a42"></div>
<svg style="left:1692px;top:239px" width="15" height="17" viewBox="0 0 15 17" ><path d="M14 1v15L1 8.500z" fill="none" stroke="#7d838c" stroke-width="1.300"/></svg>
<svg style="left:1731px;top:239px" width="20" height="17" viewBox="0 0 20 17" ><rect x=".6" y=".6" width="9" height="15.600" rx="1.500" fill="none" stroke="#7d838c" stroke-width="1.200"/><path d="M4 13.500h2.500" stroke="#7d838c"/><path d="M12 8h5.500c1 0 1.500.5 1.500 1.500V14c0 1-.5 1.500-1.500 1.500H12" fill="none" stroke="#7d838c" stroke-width="1.200"/></svg>
<div class="a" style="left:1772px;top:246px;width:3px;height:3px;border-radius:2px;background:#8a9098"></div>
<div class="a" style="left:1780px;top:246px;width:3px;height:3px;border-radius:2px;background:#8a9098"></div>
<div class="a" style="left:1788px;top:246px;width:3px;height:3px;border-radius:2px;background:#8a9098"></div>
<div class="a" style="left:1594px;top:273px;width:292px;height:606px;border-radius:16px;background:linear-gradient(180deg,#626262 0,#505050 80px,#3a3a3a 200px,#1c1c1c 340px) left top/11px 100% no-repeat,linear-gradient(90deg,#626262 0,#585858 40px,#1c1c1c 66px) left top/100% 11px no-repeat,linear-gradient(0deg,#5e5e5e 0,#4a4a4a 50px,#1c1c1c 125px) right bottom/11px 100% no-repeat,linear-gradient(270deg,#5e5e5e 0,#4a4a4a 30px,#1c1c1c 70px) right bottom/100% 10px no-repeat,#1c1c1c"></div>
<div class="a" style="left:1886px;top:382px;width:4px;height:92px;background:#2a2d33;border-radius:0 2px 2px 0"></div>
<div class="a" style="left:1886px;top:488px;width:4px;height:58px;background:#2a2d33;border-radius:0 2px 2px 0"></div>
<div class="a" style="left:1605px;top:283px;width:270px;height:586px;border-radius:8px;background:#fff"></div>
<div class="a" style="left:1640px;top:310px;width:200px;text-align:center;color:#e8a020;font-size:11.800px;line-height:20px">智慧家居v5.0</div>
<div class="a" style="left:1661px;top:335px;width:75px;height:75px;background:#f00"></div>
<div class="a" style="left:1744px;top:335px;width:75px;height:75px;background:#0f0"></div>
<div class="a" style="left:1661px;top:417px;width:75px;height:75px;background:#00f"></div>
<div class="a" style="left:1744px;top:417px;width:75px;height:75px;background:#000"></div>
<div class="a" style="left:1662px;top:366px;color:#7a1010;font-size:11px;line-height:12px">A</div>
<div class="a" style="left:1745px;top:366px;color:#0a6a0a;font-size:11px;line-height:12px">b</div>
<div class="a" style="left:1662px;top:449px;color:#101080;font-size:11px;line-height:12px">c</div>
<div class="a" style="left:1745px;top:449px;color:#222;font-size:11px;line-height:12px">d</div>
<div class="a" style="left:1632px;top:500px;width:216px;height:30px;border-radius:15px;background:#ffc0cb"></div>
<div class="a" style="left:1644px;top:505px;color:#5a5558;font-size:11.600px;line-height:20px">Name:</div>
<div class="a" style="left:1632px;top:537px;width:216px;height:30px;background:#ffc0cb"></div>
<div class="a" style="left:1644px;top:542px;color:#5a5558;font-size:11.600px;line-height:20px">Password:</div>
<svg style="left:1818px;top:545px" width="17" height="13" viewBox="0 0 17 13" ><path d="M1 6.500C3 3 6 1.500 8.500 1.500S14 3 16 6.500C14 10 11 11.500 8.500 11.500S3 10 1 6.500z" fill="none" stroke="#222" stroke-width="1.300"/><circle cx="8.500" cy="6.500" r="2.600" fill="none" stroke="#222" stroke-width="1.300"/><path d="M2.500 0l12 13" stroke="#222" stroke-width="1.400"/></svg>
<div class="a" style="left:1704px;top:575px;width:72px;height:30px;border-radius:15px;background:#0a84f5;color:#fff;font-size:12px;line-height:30px;text-align:center">ShowMe</div>
<div class="a" style="left:1692px;top:612px;width:96px;height:30px;border-radius:15px;background:#0a84f5;color:#fff;font-size:12px;line-height:31px;text-align:center">自定义对话框</div>
<div class="a" style="left:1575px;top:960px;width:312px;height:6px;border-radius:3px;background:#6b6e71"></div>
<div class="a" style="left:22px;top:967px;width:1875px;height:1px;background:#323232"></div>
<div class="a" style="left:23px;top:968px;width:1874px;height:27px;background:#3c3f41"></div>
<div class="a" style="left:0;top:995px;width:1920px;height:1px;background:#323232"></div>
<div class="t" style="left:28px;top:970px;color:#bbb">Build:</div>
<div class="t" style="left:79px;top:970px;color:#bbb">Sync</div>
<svg style="left:112px;top:978px" width="7" height="7" viewBox="0 0 7 7" ><path d="M0 0l7 7M7 0L0 7" stroke="#6a6d70" stroke-width="1"/></svg>
<div class="a" style="left:68px;top:991px;width:63px;height:3px;background:#6e7275"></div>
<div class="t" style="left:143px;top:970px;color:#bbb">Build Output</div>
<svg style="left:224px;top:978px" width="7" height="7" viewBox="0 0 7 7" ><path d="M0 0l7 7M7 0L0 7" stroke="#6a6d70" stroke-width="1"/></svg>
<svg style="left:1850.5px;top:973.5px" width="13.0" height="13.0" viewBox="0 0 13.0 13.0" ><g transform="translate(6.5,6.5)"><path d="M-1.87 -4.43 L-1.92 -6.21 L1.92 -6.21 L1.87 -4.43 L2.90 -3.84 L4.42 -4.77 L6.34 -1.44 L4.77 -0.59 L4.77 0.59 L6.34 1.44 L4.42 4.77 L2.90 3.84 L1.87 4.43 L1.92 6.21 L-1.92 6.21 L-1.87 4.43 L-2.90 3.84 L-4.42 4.77 L-6.34 1.44 L-4.77 0.59 L-4.77 -0.59 L-6.34 -1.44 L-4.42 -4.77 L-2.90 -3.84z" fill="#c4c6c8" stroke="#c4c6c8" stroke-width="1" stroke-linejoin="round"/><circle r="2.02" fill="#3c3f41"/></g></svg>
<div class="a" style="left:1878px;top:979px;width:12px;height:2px;background:#c4c6c8"></div>
<div class="a" style="left:0;top:996px;width:1920px;height:24px;background:#3c3f41"></div>
<div class="a" style="left:842px;top:997px;width:62px;height:23px;background:#2d2f30"></div>
<div class="t" style="left:51px;top:998px;color:#bbb;font-size:12px">Version Control</div>
<div class="t" style="left:170px;top:998px;color:#bbb;font-size:12px">TODO</div>
<div class="t" style="left:240px;top:998px;color:#bbb;font-size:12px">Problems</div>
<div class="t" style="left:327px;top:998px;color:#bbb;font-size:12px">Terminal</div>
<div class="t" style="left:409px;top:998px;color:#bbb;font-size:12px">Log</div>
<div class="t" style="left:471px;top:998px;color:#bbb;font-size:12px">Operation Analyzer</div>
<div class="t" style="left:615px;top:998px;color:#bbb;font-size:12px">Profiler</div>
<div class="t" style="left:692px;top:998px;color:#bbb;font-size:12px">Code Linter</div>
<div class="t" style="left:790px;top:998px;color:#bbb;font-size:12px">Services</div>
<div class="t" style="left:868px;top:998px;color:#e0e0e0;font-size:12px">Build</div>
<div class="t" style="left:935px;top:998px;color:#bbb;font-size:12px">ArkUI Inspector</div>
<div class="t" style="left:1056px;top:998px;color:#bbb;font-size:12px">PreviewerLog</div>
<svg style="left:36px;top:1002px" width="9" height="12" viewBox="0 0 9 12" ><circle cx="2" cy="2" r="1.600" fill="#afb1b3"/><circle cx="2" cy="10" r="1.600" fill="#afb1b3"/><circle cx="7" cy="3.500" r="1.600" fill="#afb1b3"/><path d="M2 2v8M7 3.500C7 7 2 6 2 9" fill="none" stroke="#afb1b3" stroke-width="1.200"/></svg>
<svg style="left:155px;top:1003px" width="11" height="10" viewBox="0 0 11 10" ><path d="M0 1h2M0 5h2M0 9h2M4 1h7M4 5h7M4 9h7" stroke="#afb1b3" stroke-width="1.600"/></svg>
<svg style="left:224px;top:1002px" width="11" height="11" viewBox="0 0 11 11" ><circle cx="5.500" cy="5.500" r="5.500" fill="#afb1b3"/><path d="M5.500 2.500v3.800M5.500 7.600v1.400" stroke="#3c3f41" stroke-width="1.500"/></svg>
<svg style="left:310px;top:1002px" width="12" height="11" viewBox="0 0 12 11" ><rect width="12" height="11" rx="1" fill="#afb1b3"/><path d="M2.500 3l2.500 2.300-2.500 2.300M6.500 8h3" fill="none" stroke="#3c3f41" stroke-width="1.200"/></svg>
<svg style="left:392px;top:1001px" width="12" height="12" viewBox="0 0 12 12" ><rect y="1.500" width="12" height="10.500" rx="1" fill="#afb1b3"/><path d="M3 0v3M9 0v3" stroke="#afb1b3" stroke-width="1.500"/><path d="M2 5.500h8M2 8.500h8" stroke="#3c3f41" stroke-width="1.200"/></svg>
<svg style="left:452px;top:1001px" width="14" height="12" viewBox="0 0 14 12" ><path d="M.6 0v11.400H14" fill="none" stroke="#afb1b3" stroke-width="1.200"/><path d="M2.500 8.500l3-4 2.500 2L12 2" fill="none" stroke="#afb1b3" stroke-width="1.200"/></svg>
<svg style="left:597px;top:1001px" width="13" height="13" viewBox="0 0 13 13" ><path d="M13 0L0 4.500l4.500 2zM13 0L6 8.500v4.500l2.500-3.500 2 1.500z" fill="#afb1b3"/></svg>
<svg style="left:674px;top:1001px" width="13" height="13" viewBox="0 0 13 13" ><circle cx="5.500" cy="5.500" r="4.600" fill="none" stroke="#afb1b3" stroke-width="1.800"/><path d="M9 9l4 4" stroke="#afb1b3" stroke-width="2.200"/><path d="M3.500 6.500l1.500-2.500 1.500 2.500" fill="none" stroke="#afb1b3" stroke-width="1"/></svg>
<svg style="left:773px;top:1002px" width="12" height="12" viewBox="0 0 12 12" ><path d="M6 0l5.200 3v6L6 12 .8 9V3z" fill="#afb1b3"/><path d="M4.500 3.500l4 2.500-4 2.500z" fill="#3c3f41"/></svg>
<svg style="left:851px;top:1002px" width="12" height="12" viewBox="0 0 12 12" ><path d="M0 3.500L3.500 0l3 1.500-1.200 1.200 6.700 6.800-2 2-6.800-6.700L2 6z" fill="#d0d2d4"/></svg>
<svg style="left:918px;top:1002px" width="12" height="11" viewBox="0 0 12 11" ><rect width="12" height="2.500" fill="#afb1b3"/><rect y="4" width="3" height="7" fill="#afb1b3"/><rect x="4.500" y="4" width="7.500" height="2.500" fill="#afb1b3"/><rect x="4.500" y="8" width="7.500" height="3" fill="#afb1b3"/></svg>
<svg style="left:1040px;top:1001px" width="11" height="13" viewBox="0 0 11 13" ><rect x=".6" y="1.600" width="9.800" height="10.800" rx="1" fill="none" stroke="#8a8c8e" stroke-width="1.100"/><path d="M3 0v3M8 0v3M2.500 6h6M2.500 9h6" stroke="#8a8c8e" stroke-width="1"/></svg>
<div class="a" style="left:0;top:1020px;width:1920px;height:20px;background:#3c3f41"></div>
<svg style="left:11px;top:1024px" width="12" height="11" viewBox="0 0 12 11" ><rect x=".6" y="2.600" width="8.800" height="7.800" fill="none" stroke="#afb1b3" stroke-width="1.100"/><path d="M2.500 2.500V.6h9v8h-2" fill="none" stroke="#afb1b3" stroke-width="1.100"/></svg>
<div class="t" style="left:39px;top:1019px;color:#bbb">Sync project finished in 1 s 881 ms (9 minutes ago)</div>
<div class="a" style="left:1681px;top:1025px;width:10px;height:10px;border-radius:5px;background:#4caf50"></div>
<div class="t" style="left:1700px;top:1020px;color:#8e9092;font-size:12.500px">39:24</div>
<div class="t" style="left:1754px;top:1020px;color:#8e9092;font-size:12.500px">CRLF</div>
<div class="t" style="left:1790px;top:1020px;color:#8e9092;font-size:12.500px">UTF-8</div>
<div class="t" style="left:1833px;top:1020px;color:#8e9092;font-size:12.500px">2 spaces</div>
<svg style="left:1896px;top:1024px" width="11" height="11" viewBox="0 0 11 11" ><rect x="3" y="4.500" width="8" height="6.500" fill="#afb1b3"/><path d="M1 5V3a2.500 2.500 0 0 1 5 0v2" fill="none" stroke="#afb1b3" stroke-width="1.300"/></svg>
<div class="a" style="left:0;top:1040px;width:1920px;height:40px;background:linear-gradient(90deg,#2a2a2a 0,#2e2e2e 5%,#3a3a3a 12%,#444342 18%,#4b4a49 30%,#494949 58%,#42474a 62%,#36454e 65.500%,#27374e 69.500%,#1d2c49 74%,#1a2948 85%,#172646 100%)"></div>
<div class="a" style="left:440px;top:1040px;width:45px;height:40px;background:#676767"></div>
<div class="a" style="left:199px;top:1078px;width:40px;height:2px;background:#76b9ed"></div>
<div class="a" style="left:248px;top:1078px;width:39px;height:2px;background:#76b9ed"></div>
<div class="a" style="left:346px;top:1078px;width:39px;height:2px;background:#76b9ed"></div>
<div class="a" style="left:395px;top:1078px;width:40px;height:2px;background:#76b9ed"></div>
<div class="a" style="left:440px;top:1078px;width:48px;height:2px;background:#76b9ed"></div>
<svg style="left:16px;top:1052px" width="16" height="16" viewBox="0 0 16 16" ><path d="M0 2.200L6.500 1.300v6.200H0zM7.500 1.200L16 0v7.500H7.500zM0 8.500h6.500v6.200L0 13.800zM7.500 8.500H16V16l-8.500-1.200z" fill="#fff"/></svg>
<svg style="left:64px;top:1052px" width="17" height="17" viewBox="0 0 17 17" ><circle cx="10.500" cy="6.500" r="5.300" fill="none" stroke="#fff" stroke-width="1.500"/><path d="M6.800 10.200L.8 16.200" stroke="#fff" stroke-width="1.800"/></svg>
<svg style="left:112px;top:1052px" width="16" height="16" viewBox="0 0 16 16" ><circle cx="8" cy="8" r="6.500" fill="none" stroke="#fff" stroke-width="2.200"/></svg>
<svg style="left:160px;top:1052px" width="17" height="17" viewBox="0 0 17 17" ><rect x="1.600" y="4.600" width="9.800" height="7.800" fill="none" stroke="#fff" stroke-width="1.200"/><path d="M0 1.600h11.500M0 15.400h11.500" stroke="#fff" stroke-width="1.200"/><path d="M14.600 1v3.500M14.600 6.500v4M14.600 12.500v3.500" stroke="#fff" stroke-width="1.200"/><path d="M13 8.500h4" stroke="#fff" stroke-width="1.200"/></svg>
<svg style="left:207px;top:1049px" width="23" height="23" viewBox="0 0 23 23" ><defs><linearGradient id="eg" x1="0" y1="0" x2="1" y2="1"><stop offset="0" stop-color="#35c1f1"/><stop offset=".5" stop-color="#1b8ad8"/><stop offset="1" stop-color="#0c59a4"/></linearGradient></defs><circle cx="11.500" cy="11.500" r="11" fill="url(#eg)"/><path d="M2 14c0-6 5-9.500 10-9.500 5.500 0 9.500 3.500 9.500 7.500 0 2.500-2 4-4.500 4-2 0-3.500-1-3.500-2.500 0-1 .8-1.500.8-2.500 0-1.500-1.500-2.700-3.500-2.700C7.500 8.300 4.500 11 4.500 15c0 3 1.800 5.500 4.500 7C5 21 2 18 2 14z" fill="#4de06a" opacity=".85"/><path d="M9 22.200c-3-1.500-4.500-4.200-4.500-7.200 0-3 2-5.500 4.500-6.300-1.500 1.500-1.800 3.800-.8 6 1.300 2.800 4.500 4.500 8 4 1.500-.2 3-.9 4-1.800-1.500 3.500-5.500 6.500-11.200 5.300z" fill="#0c59a4"/></svg>
<svg style="left:256px;top:1051px" width="24" height="20" viewBox="0 0 24 20" ><path d="M0 2h8l2 2h13v15H0z" fill="#e9a825"/><path d="M0 6h23v13H0z" fill="#fbd45a"/><rect x="6" y="12" width="11" height="7" fill="#3b8ee0"/><rect x="8.500" y="15" width="6" height="4" fill="#fbd45a"/></svg>
<svg style="left:305px;top:1049px" width="24" height="24" viewBox="0 0 24 24" ><circle cx="12" cy="12" r="12" fill="#fff"/><path d="M12 0a12 12 0 0 1 10.400 6H12a6 6 0 0 0-5.600 3.800L2.600 4.200A12 12 0 0 1 12 0z" fill="#e33b2e"/><path d="M22.400 6A12 12 0 0 1 11.500 24l5.300-9a6 6 0 0 0 .2-6z" fill="#fbc116"/><path d="M11.500 24A12 12 0 0 1 2.600 4.200L7 13a6 6 0 0 0 7.500 4.500z" fill="#2ba24c"/><circle cx="12" cy="12" r="5.400" fill="#fff"/><circle cx="12" cy="12" r="4.300" fill="#3f86f4"/></svg>
<svg style="left:353px;top:1047px" width="26" height="24" viewBox="0 0 26 24" ><defs><linearGradient id="dg" x1="0" y1="0" x2="1" y2="0"><stop offset="0" stop-color="#25c4e8"/><stop offset=".5" stop-color="#2aa5e6"/><stop offset="1" stop-color="#2c6fe0"/></linearGradient></defs><path d="M13 4.500L22.500 19.500H3.500z" fill="none" stroke="url(#dg)" stroke-width="4.200" stroke-linejoin="round"/><path d="M13 12l4 5h-2.700v5h-2.600v-5H9z" fill="#474645"/><path d="M11.700 17h2.600v6h-2.600z" fill="#474645"/></svg>
<svg style="left:402px;top:1048px" width="25" height="24" viewBox="0 0 25 24" ><defs><linearGradient id="ng" x1="1" y1="0" x2="0" y2="1"><stop offset="0" stop-color="#f4fbfc"/><stop offset=".45" stop-color="#a9dbe4"/><stop offset="1" stop-color="#2f9fb4"/></linearGradient></defs><path d="M9 1l13 1.500 1.500 17-6 3.500L1 19z" fill="#dfe9ea"/><path d="M9 1l12 1.500-3.500 18.500L1 18.500z" fill="url(#ng)"/><path d="M21 2.500l2.500 17-6 3.500z" fill="#c9d6d8"/><path d="M22 12l1.500 7.500-2 1.200z" fill="#b59a3a"/></svg>
<svg style="left:451px;top:1048px" width="26" height="24" viewBox="0 0 26 24" ><path d="M4.500 3.500C7 1.500 10 1 13 1c7 0 12 5 12 11.500S20 23 13 23 1 18.500 1 12.500c0-3 1.200-5.500 3-7.500" fill="none" stroke="#fff" stroke-width="2.200" stroke-linecap="round"/><path d="M2 16l5.500-5 3.500 3.500 5-6 8 8.500c-1.500 3.500-6 6-11 6S3.500 20 2 16z" fill="#fff"/><path d="M7.500 11l3.500 3.500-4 4.500" fill="none" stroke="#6a6a6a" stroke-width=".8"/><circle cx="9.500" cy="7" r="1.900" fill="#fff"/></svg>
<svg style="left:1670px;top:1055px" width="12" height="7" viewBox="0 0 12 7" ><path d="M.7 6.500L6 1l5.300 5.500" fill="none" stroke="#fff" stroke-width="1.300"/></svg>
<svg style="left:1692px;top:1053px" width="17" height="15" viewBox="0 0 17 15" ><rect x="4.600" y="1.600" width="11.800" height="8" fill="none" stroke="#fff" stroke-width="1.200"/><path d="M10.500 10v3M7 13.500h7" stroke="#fff" stroke-width="1.200"/><rect x=".6" y=".6" width="3" height="4" fill="none" stroke="#fff" stroke-width="1.100"/><path d="M2 5v8.500h4" fill="none" stroke="#fff" stroke-width="1.100"/></svg>
<svg style="left:1716px;top:1053px" width="17" height="14" viewBox="0 0 17 14" ><path d="M0 4.500h3L7 1v12L3 9.500H0z" fill="none" stroke="#fff" stroke-width="1.100"/><path d="M9 4.500c1 1 1 4 0 5M11.500 2.500c2 2.500 2 6.500 0 9M14 .8c3 3.500 3 9 0 12.400" fill="none" stroke="#fff" stroke-width="1.100"/></svg>
<div class="a" style="left:1740px;top:1050px;color:#fff;font-size:14px;line-height:20px;font-weight:bold;font-family:'Liberation Sans','Noto Sans CJK SC',sans-serif">英</div>
<div class="a" style="left:1768px;top:1052px;width:16px;height:16px;background:#fff;color:#111;font-size:13px;line-height:15px;text-align:center;font-weight:bold;font-family:'Liberation Sans','Noto Sans CJK SC',sans-serif">拼</div>
<div class="a" style="left:1800px;top:1042px;width:60px;text-align:center;color:#fff;font-size:12px;line-height:18px">17:45</div>
<div class="a" style="left:1795px;top:1060px;width:70px;text-align:center;color:#fff;font-size:12px;line-height:18px">2024/9/3</div>
<svg style="left:1879px;top:1053px" width="17" height="16" viewBox="0 0 17 16" ><path d="M.7 .7h15.600v11H11l-2.500 3-2.500-3H.7z" fill="none" stroke="#fff" stroke-width="1.200"/></svg>
<div class="a" style="left:1915px;top:1040px;width:1px;height:40px;background:#5a6478"></div>
<div class="a" style="left:1585px;top:1017px;color:rgba(255,255,255,.86);font-size:24.600px;line-height:36px;text-shadow:0 0 3px rgba(0,0,0,.55),1px 1px 2px rgba(0,0,0,.5);font-family:'Liberation Sans','Noto Sans CJK SC',sans-serif">掘金技术社区<span style="font-size:26px;letter-spacing:1.150px;margin-left:8px">@Linglingyu</span></div>
</div>
<div class="a" style="left:1921px;top:534px;width:3px;height:3px;border-radius:2px;background:#e02020"></div>
</body></html>
